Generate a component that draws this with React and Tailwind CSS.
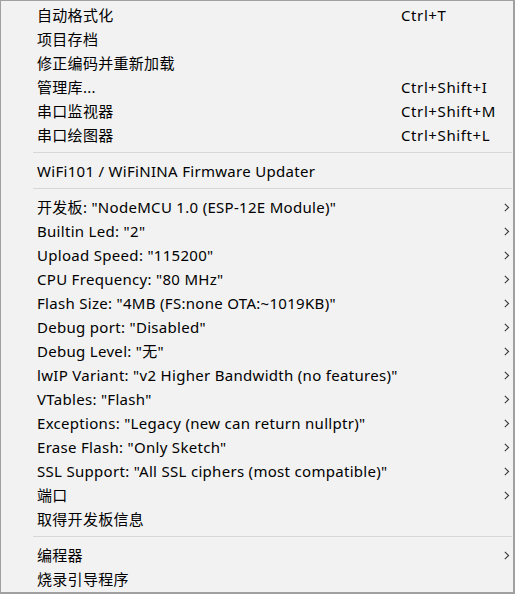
import React from "react";

const groups = [
  [
    { t: "自动格式化", k: "Ctrl+T" },
    { t: "项目存档" },
    { t: "修正编码并重新加载" },
    { t: "管理库...", k: "Ctrl+Shift+I" },
    { t: "串口监视器", k: "Ctrl+Shift+M" },
    { t: "串口绘图器", k: "Ctrl+Shift+L" },
  ],
  [{ t: "WiFi101 / WiFiNINA Firmware Updater" }],
  [
    { t: '开发板: "NodeMCU 1.0 (ESP-12E Module)"', s: true },
    { t: 'Builtin Led: "2"', s: true },
    { t: 'Upload Speed: "115200"', s: true },
    { t: 'CPU Frequency: "80 MHz"', s: true },
    { t: 'Flash Size: "4MB (FS:none OTA:~1019KB)"', s: true },
    { t: 'Debug port: "Disabled"', s: true },
    { t: 'Debug Level: "无"', s: true },
    { t: 'lwIP Variant: "v2 Higher Bandwidth (no features)"', s: true },
    { t: 'VTables: "Flash"', s: true },
    { t: 'Exceptions: "Legacy (new can return nullptr)"', s: true },
    { t: 'Erase Flash: "Only Sketch"', s: true },
    { t: 'SSL Support: "All SSL ciphers (most compatible)"', s: true },
    { t: "端口", s: true },
    { t: "取得开发板信息" },
  ],
  [{ t: "编程器", s: true }, { t: "烧录引导程序" }],
];

function Chevron() {
  return (
    <svg width="6" height="9" viewBox="0 0 6 9" className="block">
      <path d="M0.8 0.8 L4.6 4.5 L0.8 8.2" fill="none" stroke="#3c3c3c" strokeWidth="1.1" />
    </svg>
  );
}

function Row({ t, k, s }) {
  return (
    <div className="flex h-[24px] items-center">
      <div className="pl-[36px] flex-1 whitespace-nowrap tracking-[0.3px]">{t}</div>
      <div className="w-[103px] whitespace-nowrap tracking-[0.6px]">{k || ""}</div>
      <div className="w-[9px] flex items-center">{s ? <Chevron /> : null}</div>
    </div>
  );
}

export default function App() {
  return (
    <div
      className="w-[515px] h-[594px] bg-[#f2f2f2] border-l border-t border-r-2 border-b-2 border-[#a0a0a0] text-[15px] text-black pt-[2px] overflow-hidden"
      style={{ fontFamily: '"Noto Sans", "Noto Sans CJK SC", sans-serif' }}
    >
      {groups.map((g, gi) => (
        <div key={gi}>
          {gi > 0 && (
            <div className="h-[12px] pt-[5px] pl-[32px] pr-[1px]">
              <div className="h-px bg-[#d7d7d7]" />
            </div>
          )}
          {g.map((r, ri) => (
            <Row key={ri} {...r} />
          ))}
        </div>
      ))}
    </div>
  );
}
